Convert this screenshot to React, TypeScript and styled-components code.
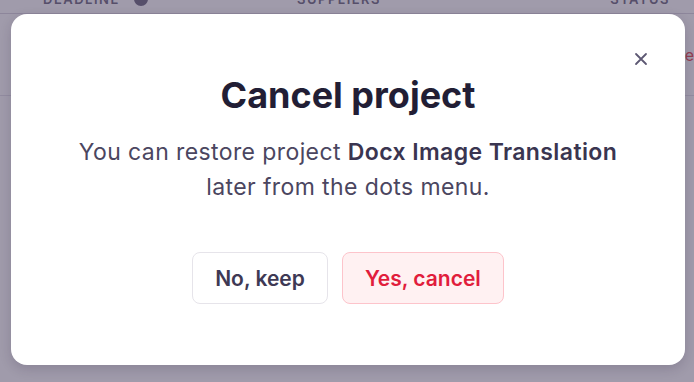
import React from "react";
import styled, { createGlobalStyle } from "styled-components";

const Global = createGlobalStyle`
  html, body { margin: 0; padding: 0; }
  body { font-family: Inter, "Noto Sans", sans-serif; background: #fff; }
  * { box-sizing: border-box; }
`;

const Page = styled.div`
  position: relative;
  width: 694px;
  height: 382px;
  overflow: hidden;
  background: #ffffff;
`;

const TableHead = styled.div`
  display: grid;
  grid-template-columns: 254px 300px 1fr;
  align-items: end;
  height: 14px;
  padding-left: 43px;
  border-bottom: 1px solid #d9d6df;
  font-size: 13px;
  font-weight: 600;
  letter-spacing: 1.5px;
  color: #6f6a80;
  line-height: 14px;
  overflow: hidden;
`;

const HeadCell = styled.div<{ $end?: boolean }>`
  display: flex;
  align-items: center;
  gap: 14px;
  transform: translateY(-8px);
  justify-content: ${(p) => (p.$end ? "flex-end" : "flex-start")};
  padding-right: ${(p) => (p.$end ? "24px" : "0")};
`;

const InfoDot = styled.span`
  width: 14px;
  height: 14px;
  border-radius: 50%;
  background: #6f6a80;
`;

const Row = styled.div`
  height: 82px;
  border-bottom: 1px solid #e4e1ea;
  display: flex;
  justify-content: flex-end;
  align-items: center;
  font-size: 16px;
  color: #e5484d;
`;

const Overlay = styled.div`
  position: absolute;
  inset: 0;
  background: rgba(62, 50, 84, 0.49);
`;

const Modal = styled.div`
  position: absolute;
  left: 11px;
  top: 14px;
  width: 674px;
  height: 351px;
  background: #ffffff;
  border-radius: 16px;
  box-shadow: 0 4px 12px rgba(40, 30, 60, 0.18);
  display: flex;
  flex-direction: column;
  align-items: center;
  padding-top: 61px;
`;

const Close = styled.button`
  position: absolute;
  top: 37px;
  right: 36px;
  width: 16px;
  height: 16px;
  padding: 0;
  border: none;
  background: none;
  display: flex;
  align-items: center;
  justify-content: center;
  cursor: pointer;
`;

const Title = styled.h2`
  margin: 0;
  font-size: 36px;
  line-height: 40px;
  font-weight: 700;
  color: #221e35;
`;

const Body = styled.p`
  margin: 20px 0 0;
  font-size: 23px;
  letter-spacing: 0.4px;
  line-height: 35px;
  color: #4b4660;
  text-align: center;
  max-width: 580px;
`;

const Strong = styled.strong`
  font-weight: 600;
  color: #3a3550;
`;

const Actions = styled.div`
  display: flex;
  gap: 14px;
  margin-top: 47px;
`;

const Button = styled.button<{ $danger?: boolean }>`
  height: 52px;
  padding: 0 22px;
  border-radius: 8px;
  font-family: Inter, "Noto Sans", sans-serif;
  font-size: 21px;
  font-weight: 600;
  cursor: pointer;
  border: 1px solid ${(p) => (p.$danger ? "#fdc4cb" : "#e6e4ea")};
  background: ${(p) => (p.$danger ? "#fff1f2" : "#ffffff")};
  color: ${(p) => (p.$danger ? "#e11d3c" : "#3e3954")};
`;

export default function App() {
  return (
    <Page>
      <Global />
      <TableHead>
        <HeadCell>
          DEADLINE <InfoDot />
        </HeadCell>
        <HeadCell>SUPPLIERS</HeadCell>
        <HeadCell $end>STATUS</HeadCell>
      </TableHead>
      <Row>re</Row>
      <Overlay />
      <Modal role="dialog" aria-modal="true">
        <Close aria-label="Close">
          <svg width="14" height="14" viewBox="0 0 14 14" fill="none">
            <path d="M2 2L12 12M12 2L2 12" stroke="#5d5873" strokeWidth="1.8" strokeLinecap="round" />
          </svg>
        </Close>
        <Title>Cancel project</Title>
        <Body>
          You can restore project <Strong>Docx Image Translation</Strong> later from the dots menu.
        </Body>
        <Actions>
          <Button>No, keep</Button>
          <Button $danger>Yes, cancel</Button>
        </Actions>
      </Modal>
    </Page>
  );
}
